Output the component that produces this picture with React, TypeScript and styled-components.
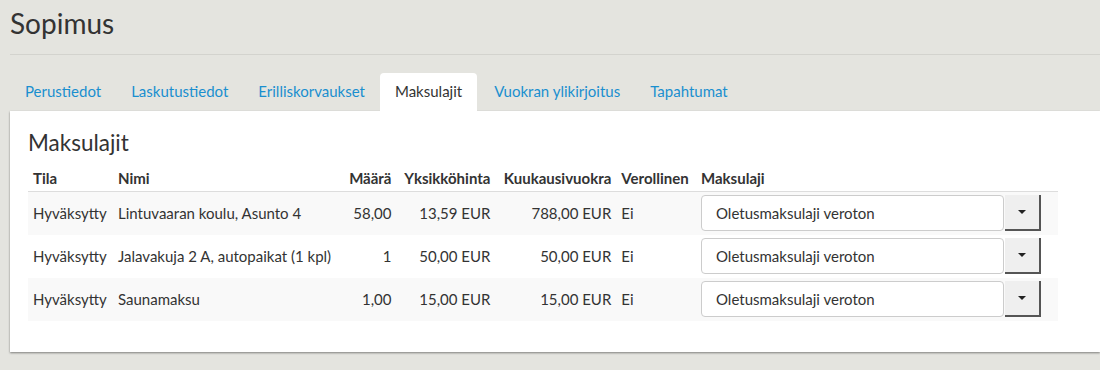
import React from "react";
import styled, { createGlobalStyle } from "styled-components";

const GlobalStyle = createGlobalStyle`
  body {
    margin: 0;
    background: #e4e4df;
    font-family: Lato, "Open Sans", sans-serif;
    color: #333;
    font-size: 14px;
  }
`;

const Page = styled.div`
  padding-left: 10px;
  height: 370px;
  overflow: hidden;
`;

const Title = styled.h1`
  margin: 0;
  height: 55px;
  padding-top: 5px;
  box-sizing: border-box;
  font-size: 28px;
  font-weight: 400;
  line-height: 36px;
  color: #333;
  border-bottom: 1px solid #d3d3ce;
`;

const TabBar = styled.div`
  display: flex;
  margin-top: 18px;
  height: 38px;
`;

const Tab = styled.div<{ $active?: boolean }>`
  padding: 0 15px;
  margin-right: ${(p) => (p.$active ? "2px" : "0")};
  line-height: 36px;
  font-size: 15px;
  color: ${(p) => (p.$active ? "#333" : "#1a8fcf")};
  background: ${(p) => (p.$active ? "#fff" : "transparent")};
  border-radius: 4px 4px 0 0;
  cursor: pointer;
`;

const Panel = styled.div`
  background: #fff;
  padding: 17px 42px 31px 18px;
  box-shadow: 0 1px 2px rgba(0, 0, 0, 0.45);
`;

const Heading = styled.h2`
  margin: 0 0 9px;
  font-size: 22.5px;
  font-weight: 400;
  line-height: 30px;
  color: #333;
`;

const Table = styled.table`
  width: 100%;
  border-collapse: collapse;
  font-size: 15px;
`;

const Th = styled.th<{ $right?: boolean; $w?: number }>`
  text-align: ${(p) => (p.$right ? "right" : "left")};
  width: ${(p) => (p.$w ? `${p.$w}px` : "auto")};
  padding: 2px 5px 4px;
  font-weight: 700;
  border-bottom: 1px solid #ddd;
  white-space: nowrap;
`;

const Tr = styled.tr<{ $striped?: boolean }>`
  background: ${(p) => (p.$striped ? "#f9f9f9" : "#fff")};
`;

const Td = styled.td<{ $right?: boolean }>`
  text-align: ${(p) => (p.$right ? "right" : "left")};
  padding: 3px 5px 4px;
  height: 36px;
  white-space: nowrap;
`;

const SelectGroup = styled.div`
  display: flex;
  width: 340px;
  height: 36px;
`;

const SelectValue = styled.div`
  flex: 1;
  background: #fff;
  border: 1px solid #ccc;
  border-radius: 4px;
  padding: 0 14px;
  line-height: 34px;
  color: #333;
`;

const SelectButton = styled.div`
  width: 36px;
  margin-left: 1px;
  background: #efefef;
  border-right: 2px solid #555;
  border-bottom: 2px solid #555;
  box-sizing: border-box;
  display: flex;
  align-items: center;
  justify-content: center;
`;

const Caret = styled.span`
  width: 0;
  height: 0;
  border-left: 4px solid transparent;
  border-right: 4px solid transparent;
  border-top: 4px solid #222;
`;

const tabs = [
  "Perustiedot",
  "Laskutustiedot",
  "Erilliskorvaukset",
  "Maksulajit",
  "Vuokran ylikirjoitus",
  "Tapahtumat",
];

const rows = [
  {
    tila: "Hyväksytty",
    nimi: "Lintuvaaran koulu, Asunto 4",
    maara: "58,00",
    hinta: "13,59 EUR",
    vuokra: "788,00 EUR",
  },
  {
    tila: "Hyväksytty",
    nimi: "Jalavakuja 2 A, autopaikat (1 kpl)",
    maara: "1",
    hinta: "50,00 EUR",
    vuokra: "50,00 EUR",
  },
  {
    tila: "Hyväksytty",
    nimi: "Saunamaksu",
    maara: "1,00",
    hinta: "15,00 EUR",
    vuokra: "15,00 EUR",
  },
];

export default function App() {
  return (
    <Page>
      <GlobalStyle />
      <Title>Sopimus</Title>
      <TabBar>
        {tabs.map((t) => (
          <Tab key={t} $active={t === "Maksulajit"}>
            {t}
          </Tab>
        ))}
      </TabBar>
      <Panel>
        <Heading>Maksulajit</Heading>
        <Table>
          <thead>
            <tr>
              <Th $w={75}>Tila</Th>
              <Th>Nimi</Th>
              <Th $right>Määrä</Th>
              <Th $right>Yksikköhinta</Th>
              <Th $right>Kuukausivuokra</Th>
              <Th>Verollinen</Th>
              <Th $w={352}>Maksulaji</Th>
            </tr>
          </thead>
          <tbody>
            {rows.map((r, i) => (
              <Tr key={i} $striped={i % 2 === 0}>
                <Td>{r.tila}</Td>
                <Td>{r.nimi}</Td>
                <Td $right>{r.maara}</Td>
                <Td $right>{r.hinta}</Td>
                <Td $right>{r.vuokra}</Td>
                <Td>Ei</Td>
                <Td>
                  <SelectGroup>
                    <SelectValue>Oletusmaksulaji veroton</SelectValue>
                    <SelectButton>
                      <Caret />
                    </SelectButton>
                  </SelectGroup>
                </Td>
              </Tr>
            ))}
          </tbody>
        </Table>
      </Panel>
    </Page>
  );
}
